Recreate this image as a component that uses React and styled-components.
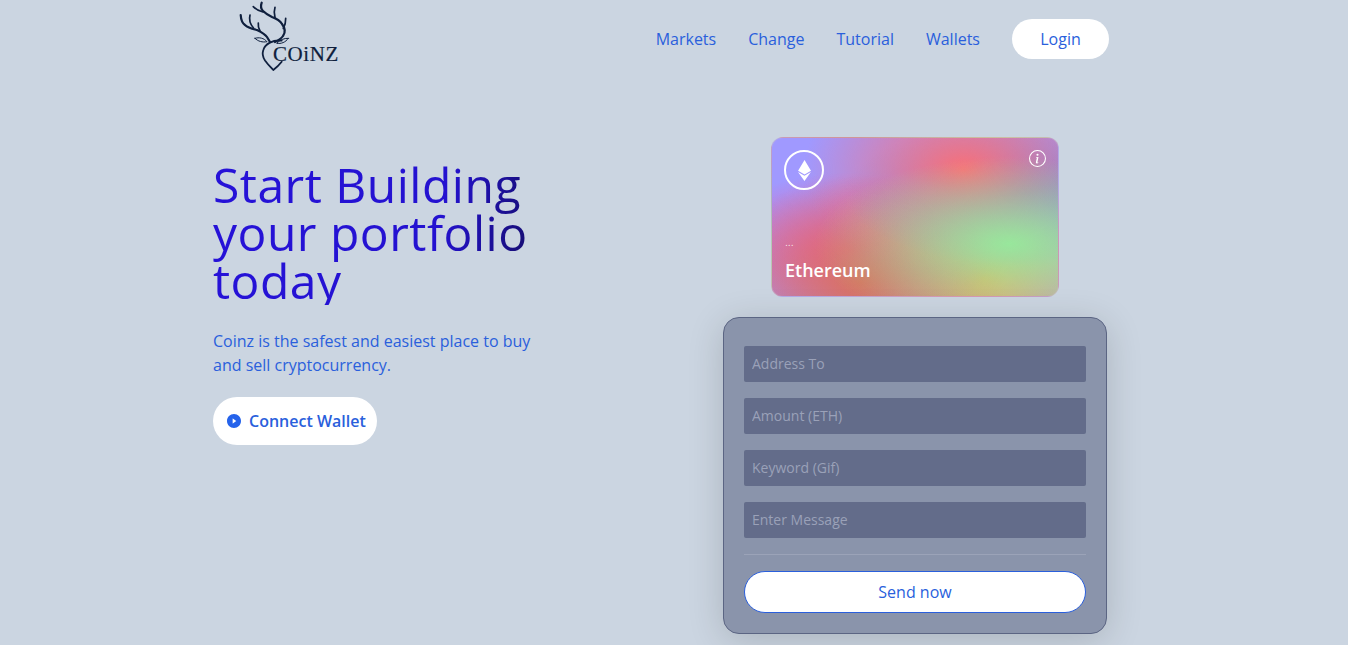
import React from "react";
import styled, { createGlobalStyle } from "styled-components";
import { AiFillPlayCircle } from "react-icons/ai";
import { SiEthereum } from "react-icons/si";
import { BsInfoCircle } from "react-icons/bs";

const GlobalStyle = createGlobalStyle`
  * { box-sizing: border-box; }
  html, body { margin: 0; padding: 0; background: #cbd5e1; }
  body { font-family: "Open Sans", "Liberation Sans", sans-serif; overflow: hidden; }
`;

const NAV_ITEMS = ["Markets", "Change", "Tutorial", "Wallets"];
const FIELDS = ["Address To", "Amount (ETH)", "Keyword (Gif)", "Enter Message"];

function Logo() {
  return (
    <LogoBox>
      <svg width="62" height="72" viewBox="0 0 62 72" fill="none">
        <g stroke="#0f1f3d" strokeLinecap="round" strokeLinejoin="round">
          {/* left antler */}
          <path d="M1.7 15 C2 20 3 23 6 25 C9 28 14 29 18 30 C22 32 26 34 28 37 L31 42" strokeWidth="2.2" />
          <path d="M11 15 C10 19 11 24 14.5 28" strokeWidth="1.7" />
          <path d="M19.3 23 C19 25 19.5 28 21 31" strokeWidth="1.7" />
          {/* right antler */}
          <path d="M22.7 2.7 C21.5 6 22 9 24 11 C27 14 30 15.5 33 17 C37 18.5 41 20.5 43 24 C46 28 47 32 44 36 C42 39 39 40.5 36 42" strokeWidth="2.2" />
          <path d="M14.3 6.7 C17 9.5 20 11 24 12" strokeWidth="1.7" />
          <path d="M36 7.3 C35 10.5 35 14 36 17.5" strokeWidth="1.7" />
          <path d="M46.7 18.3 C46.8 22 46 25.5 44.3 28.5" strokeWidth="1.7" />
          {/* ears */}
          <path d="M16 38.3 C20 37 25 38 28 41.7 C23.5 42.5 19 41.5 16 38.3 Z" strokeWidth="1" />
          <path d="M49.3 38.3 C45 38 41 40 37.7 43.3 C42 44 46.5 42.5 49.3 38.3 Z" strokeWidth="1" />
          {/* shield */}
          <path d="M42.7 40.7 C34 39.5 26 44 24.3 50 C23 54 24 57.5 26 60.5 C28.5 64 31.5 67 34.3 70 C37.5 67.5 40.5 64.5 42.7 61.7" strokeWidth="1.8" />
        </g>
      </svg>
      <LogoWord>COiNZ</LogoWord>
    </LogoBox>
  );
}

export default function App() {
  return (
    <Page>
      <GlobalStyle />
      <Header>
        <Logo />
        <Nav>
          {NAV_ITEMS.map((item) => (
            <NavLink key={item}>{item}</NavLink>
          ))}
          <LoginBtn>Login</LoginBtn>
        </Nav>
      </Header>
      <Main>
        <Intro>
          <Title>
            Start Building
            <br />
            your portfolio
            <br />
            today
          </Title>
          <Lead>
            Coinz is the safest and easiest place to buy
            <br />
            and sell cryptocurrency.
          </Lead>
          <ConnectBtn>
            <AiFillPlayCircle size={16} color="#2563eb" />
            Connect Wallet
          </ConnectBtn>
        </Intro>
        <Side>
          <EthCard>
            <CardTop>
              <EthBadge>
                <SiEthereum size={21} color="#fff" />
              </EthBadge>
              <BsInfoCircle size={17} color="#fff" />
            </CardTop>
            <div>
              <CardAddress>...</CardAddress>
              <CardName>Ethereum</CardName>
            </div>
          </EthCard>
          <SendForm>
            {FIELDS.map((field) => (
              <Field key={field} placeholder={field} />
            ))}
            <Divider />
            <SendBtn type="button">Send now</SendBtn>
          </SendForm>
        </Side>
      </Main>
    </Page>
  );
}

const Page = styled.div`
  width: 100%;
  height: 645px;
  background: #cbd5e1;
  color: #2a5fdc;
`;

const Header = styled.header`
  display: flex;
  justify-content: space-between;
  align-items: center;
  height: 77px;
  padding: 0 239px;
`;

const LogoBox = styled.div`
  position: relative;
  width: 100px;
  height: 72px;
  margin-bottom: 5px;
`;

const LogoWord = styled.span`
  position: absolute;
  left: 34px;
  top: 41px;
  font-family: "Liberation Serif", serif;
  font-size: 21px;
  line-height: 26px;
  color: #0f1f3d;
  letter-spacing: 0.6px;
  -webkit-text-stroke: 0.2px #0f1f3d;
`;

const Nav = styled.nav`
  display: flex;
  align-items: center;
  gap: 32px;
`;

const NavLink = styled.a`
  font-size: 16px;
  line-height: 24px;
  color: #2a5fdc;
`;

const LoginBtn = styled.button`
  width: 97px;
  height: 40px;
  border: none;
  border-radius: 20px;
  background: #fff;
  color: #2a5fdc;
  font: inherit;
  font-size: 16px;
`;

const Main = styled.main`
  display: flex;
  align-items: flex-start;
  padding: 60px 0 0 213px;
`;

const Intro = styled.section`
  width: 510px;
  padding-top: 24px;
`;

const Title = styled.h1`
  margin: 0;
  width: fit-content;
  white-space: nowrap;
  font-size: 48px;
  line-height: 48px;
  font-weight: 400;
  letter-spacing: 0.5px;
  color: transparent;
  background: linear-gradient(100deg, #2612d8 0%, #2412d0 70%, #150d6a 100%);
  -webkit-background-clip: text;
  background-clip: text;
`;

const Lead = styled.p`
  margin: 24px 0 0;
  font-size: 16px;
  line-height: 24px;
  color: #2a5fdc;
`;

const ConnectBtn = styled.button`
  display: flex;
  align-items: center;
  gap: 7px;
  margin-top: 20px;
  height: 48px;
  padding: 0 11px 0 13px;
  border: none;
  border-radius: 24px;
  background: #fff;
  color: #2a5fdc;
  font: inherit;
  font-size: 16px;
  font-weight: 600;
`;

const Side = styled.section`
  display: flex;
  flex-direction: column;
  align-items: center;
  width: 384px;
`;

const EthCard = styled.div`
  display: flex;
  flex-direction: column;
  justify-content: space-between;
  width: 288px;
  height: 160px;
  padding: 12px;
  border: 1px solid rgba(205, 190, 200, 0.45);
  border-radius: 12px;
  color: #fff;
  background-color: #a099ff;
  background-image: radial-gradient(at 83% 67%, rgb(152, 231, 156) 0, transparent 58%),
    radial-gradient(at 67% 20%, hsla(357, 94%, 71%, 1) 0, transparent 59%),
    radial-gradient(at 88% 35%, hsla(222, 81%, 65%, 1) 0, transparent 50%),
    radial-gradient(at 31% 91%, hsla(9, 61%, 61%, 1) 0, transparent 52%),
    radial-gradient(at 27% 71%, hsla(336, 91%, 65%, 1) 0, transparent 49%),
    radial-gradient(at 74% 89%, hsla(30, 98%, 65%, 1) 0, transparent 51%),
    radial-gradient(at 53% 75%, hsla(174, 94%, 68%, 1) 0, transparent 45%);
`;

const CardTop = styled.div`
  display: flex;
  justify-content: space-between;
  align-items: flex-start;
`;

const EthBadge = styled.div`
  display: flex;
  align-items: center;
  justify-content: center;
  width: 40px;
  height: 40px;
  border: 2px solid #fff;
  border-radius: 50%;
`;

const CardAddress = styled.p`
  margin: 0 0 0 1px;
  font-size: 12px;
  line-height: 20px;
  font-weight: 300;
`;

const CardName = styled.p`
  margin: 4px 0 0;
  padding-left: 1px;
  font-size: 18px;
  line-height: 28px;
  font-weight: 600;
`;

const SendForm = styled.form`
  display: flex;
  flex-direction: column;
  gap: 16px;
  width: 384px;
  height: 317px;
  margin-top: 20px;
  padding: 28px 20px 20px;
  border: 1px solid #5b6583;
  border-radius: 16px;
  background: #8a94ab;
  box-shadow: 0 6px 36px rgba(0, 0, 0, 0.16);
`;

const Field = styled.input`
  flex: none;
  width: 100%;
  height: 36px;
  padding: 0 8px 2px;
  border: none;
  border-radius: 2px;
  background: #636c8a;
  color: #fff;
  font: inherit;
  font-size: 14px;
  outline: none;
  &::placeholder {
    color: #9aa1b8;
    opacity: 1;
  }
`;

const Divider = styled.div`
  height: 1px;
  background: #9ba3b8;
`;

const SendBtn = styled.button`
  height: 42px;
  border: 1px solid #2a5fdc;
  border-radius: 21px;
  background: #fff;
  color: #2a5fdc;
  font: inherit;
  font-size: 16px;
`;
